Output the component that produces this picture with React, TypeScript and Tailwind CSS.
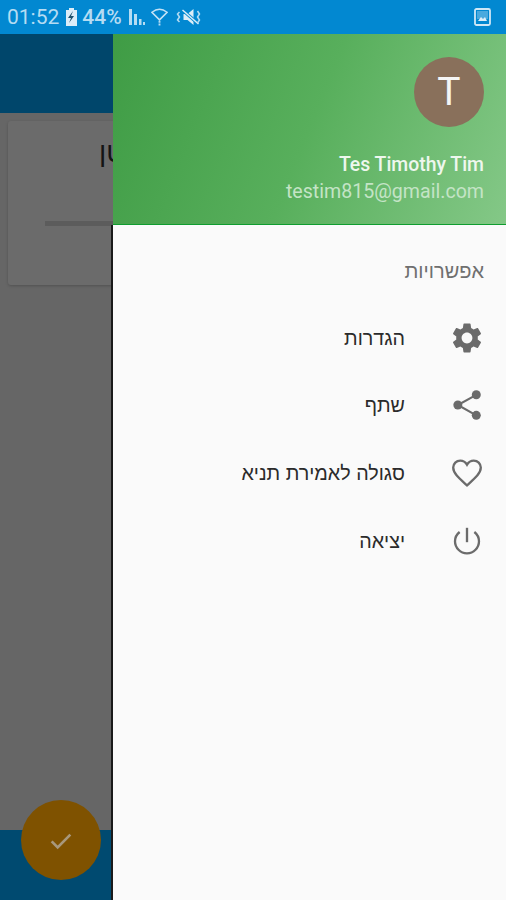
const HEB = { fontFamily: '"Liberation Sans", "DejaVu Sans", sans-serif' };

const gear = "M19.14 12.94c.04-.3.06-.61.06-.94 0-.32-.02-.64-.07-.94l2.03-1.58c.18-.14.23-.41.12-.61l-1.92-3.32c-.12-.22-.37-.29-.59-.22l-2.39.96c-.5-.38-1.03-.7-1.62-.94l-.36-2.54c-.04-.24-.24-.41-.48-.41h-3.84c-.24 0-.43.17-.47.41l-.36 2.54c-.59.24-1.13.57-1.62.94l-2.39-.96c-.22-.08-.47 0-.59.22L2.74 8.87c-.12.21-.08.47.12.61l2.03 1.58c-.05.3-.09.63-.09.94s.02.64.07.94l-2.03 1.58c-.18.14-.23.41-.12.61l1.92 3.32c.12.22.37.29.59.22l2.39-.96c.5.38 1.03.7 1.62.94l.36 2.54c.05.24.24.41.48.41h3.84c.24 0 .44-.17.47-.41l.36-2.54c.59-.24 1.13-.56 1.62-.94l2.39.96c.22.08.47 0 .59-.22l1.92-3.32c.12-.22.07-.47-.12-.61l-2.01-1.58zM12 15.6c-1.98 0-3.6-1.62-3.6-3.6s1.62-3.6 3.6-3.6 3.6 1.62 3.6 3.6-1.62 3.6-3.6 3.6z";

const items = [
  {
    label: "הגדרות",
    icon: <path d={gear} fill="#6b6b6b" />,
  },
  {
    label: "שתף",
    icon: (
      <g fill="#6b6b6b">
        <circle cx="18.2" cy="5.2" r="3" />
        <circle cx="5.9" cy="12" r="3" />
        <circle cx="18.2" cy="18.900" r="3" />
        <path d="M18.200 5.200 5.900 12l12.300 6.900" fill="none" stroke="#6b6b6b" strokeWidth="1.400" />
      </g>
    ),
  },
  {
    label: "סגולה לאמירת תניא",
    icon: (
      <path
        d="M12 20.300C6.500 15.300 2.800 12.200 2.800 8.400 2.800 5.700 4.900 3.700 7.500 3.700c1.800 0 3.500 1 4.500 2.700 1-1.700 2.700-2.700 4.500-2.700 2.600 0 4.700 2 4.700 4.700 0 3.800-3.700 6.900-9.200 11.900z"
        fill="none"
        stroke="#6b6b6b"
        strokeWidth="1.550"
      />
    ),
  },
  {
    label: "יציאה",
    icon: (
      <g fill="none" stroke="#6b6b6b" strokeWidth="1.550">
        <path d="M12 3.200v9.600" />
        <path d="M16.900 6c1.900 1.500 3.100 3.700 3.100 6.200 0 4.400-3.600 8-8 8s-8-3.600-8-8c0-2.500 1.200-4.700 3.100-6.200" />
      </g>
    ),
  },
];

function StatusBar() {
  return (
    <div className="h-[34px] shrink-0 bg-[#0288d1] flex items-center justify-between pl-[7px] pr-[15px] text-[#b5dcf3]">
      <div className="flex items-center">
        <span className="text-[21px] leading-none" style={{ fontFamily: "Roboto, sans-serif" }}>01:52</span>
        <svg width="13" height="18" viewBox="0 0 13 18" className="ml-[6px]">
          <path d="M4 0h5v2h3v16H1V2h3z" fill="#dcedf8" />
          <path d="M8 3 3 10h3l-2 5 5-7H6z" fill="#1d4f6b" />
        </svg>
        <span className="text-[21px] leading-none ml-[4px] font-medium" style={{ fontFamily: "Roboto, sans-serif" }}>44%</span>
        <svg width="18" height="18" viewBox="0 0 18 18" className="ml-[6px]">
          <path d="M1 1h3v16H1zM6 6h3v11H6zM11 11h2.500v6H11zM15 14h2v3h-2z" fill="#b5dcf3" />
        </svg>
        <svg width="17" height="18" viewBox="0 0 18 18" className="ml-[5px]">
          <path d="M1 4c5-4 11-4 16 0L9 12z" fill="none" stroke="#c4e2f5" strokeWidth="1.600" />
          <path d="M8 13h2v2H8zM8 16h2v2H8z" fill="#b5dcf3" />
        </svg>
        <svg width="27" height="18" viewBox="0 0 26 18" className="ml-[8px]">
          <path d="M7 6h4l6-5v16l-6-5H7z" fill="#dcedf8" />
          <path d="M6 2l16 14" stroke="#0288d1" strokeWidth="3" />
          <path d="M6 2l16 14" stroke="#dcedf8" strokeWidth="1.500" />
          <path d="M3 4 1 6l2 3-2 3 2 2M21 3l2 3-2 3 2 3-2 3" fill="none" stroke="#b5dcf3" strokeWidth="1.500" />
        </svg>
      </div>
      <svg width="17" height="18" viewBox="0 0 17 18">
        <rect x="1" y="1" width="15" height="16" rx="1.500" fill="none" stroke="#cfe7f6" strokeWidth="1.800" />
        <path d="M3 3h11v8H3z" fill="#cfe7f6" opacity="0.35" />
        <path d="M4 13l3-4 2 2 2-2 2 4z" fill="#dcedf8" />
      </svg>
    </div>
  );
}

function DimmedPage() {
  return (
    <div className="w-[113px] shrink-0 bg-[#666666] flex flex-col overflow-hidden">
      <div className="h-[79px] shrink-0 bg-[#00466b]" />
      <div className="flex-1 pl-2 pt-2">
        <div className="w-[240px] h-[164px] bg-[#6b6b6b] rounded-[3px] shadow-[0_1px_3px_rgba(0,0,0,0.2)] flex flex-col">
          <div dir="rtl" className="h-[100px] pt-[14px] pr-[107px] text-[28px] leading-[36px] text-[#141414]" style={HEB}>קטן</div>
          <div className="h-[5px] ml-[37px] bg-[#5c5c5c]" />
        </div>
      </div>
      <div className="h-[70px] shrink-0 bg-[#004a70]" />
    </div>
  );
}

function Drawer() {
  return (
    <div className="flex-1 flex flex-col bg-[#fafafa] relative">
      <div className="absolute -left-[2px] top-[191px] bottom-0 w-[2px] bg-[#1a1a1a]" />
      <div className="h-[191px] shrink-0 bg-[linear-gradient(112deg,#3f9c45_0%,#58af5c_50%,#84c887_100%)] border-b border-[#0f9d2f] flex flex-col items-end pr-[22px] pt-[23px]" style={{ fontFamily: "Roboto, sans-serif" }}>
        <div className="w-[70px] h-[70px] rounded-full bg-[#89705b] flex items-center justify-center text-[#f5f5f5] text-[39px] leading-none">T</div>
        <div className="mt-[26px] text-[19.4px] leading-[24px] font-medium text-[#eef7ee]">Tes Timothy Tim</div>
        <div className="mt-[3px] text-[19.6px] leading-[24px] text-[#c4e4c6]">testim815@gmail.com</div>
      </div>
      <div dir="rtl" className="flex flex-col" style={HEB}>
        <div className="pt-[34px] pr-[22px] h-[79px] text-[20px] leading-[24px] text-[#6f6f6f]">אפשרויות</div>
        {items.map((it) => (
          <div key={it.label} className="h-[67.6px] flex items-center gap-[44px] pr-[21px]">
            <svg width="36" height="36" viewBox="0 0 24 24" className="shrink-0">
              {it.icon}
            </svg>
            <span className="text-[19.7px] leading-[24px] text-[#2b2b2b]">{it.label}</span>
          </div>
        ))}
      </div>
    </div>
  );
}

export default function App() {
  return (
    <div className="w-[506px] h-[900px] flex flex-col overflow-hidden relative">
      <StatusBar />
      <div className="flex-1 flex min-h-0">
        <DimmedPage />
        <Drawer />
      </div>
      <div className="absolute left-[21px] top-[800px] w-[80px] h-[80px] rounded-full bg-[#7f5200] flex items-center justify-center">
        <svg width="32" height="32" viewBox="0 0 24 24" fill="none" stroke="#a8987c" strokeWidth="2">
          <path d="M5 13l4.500 4.500L19 8" />
        </svg>
      </div>
    </div>
  );
}
